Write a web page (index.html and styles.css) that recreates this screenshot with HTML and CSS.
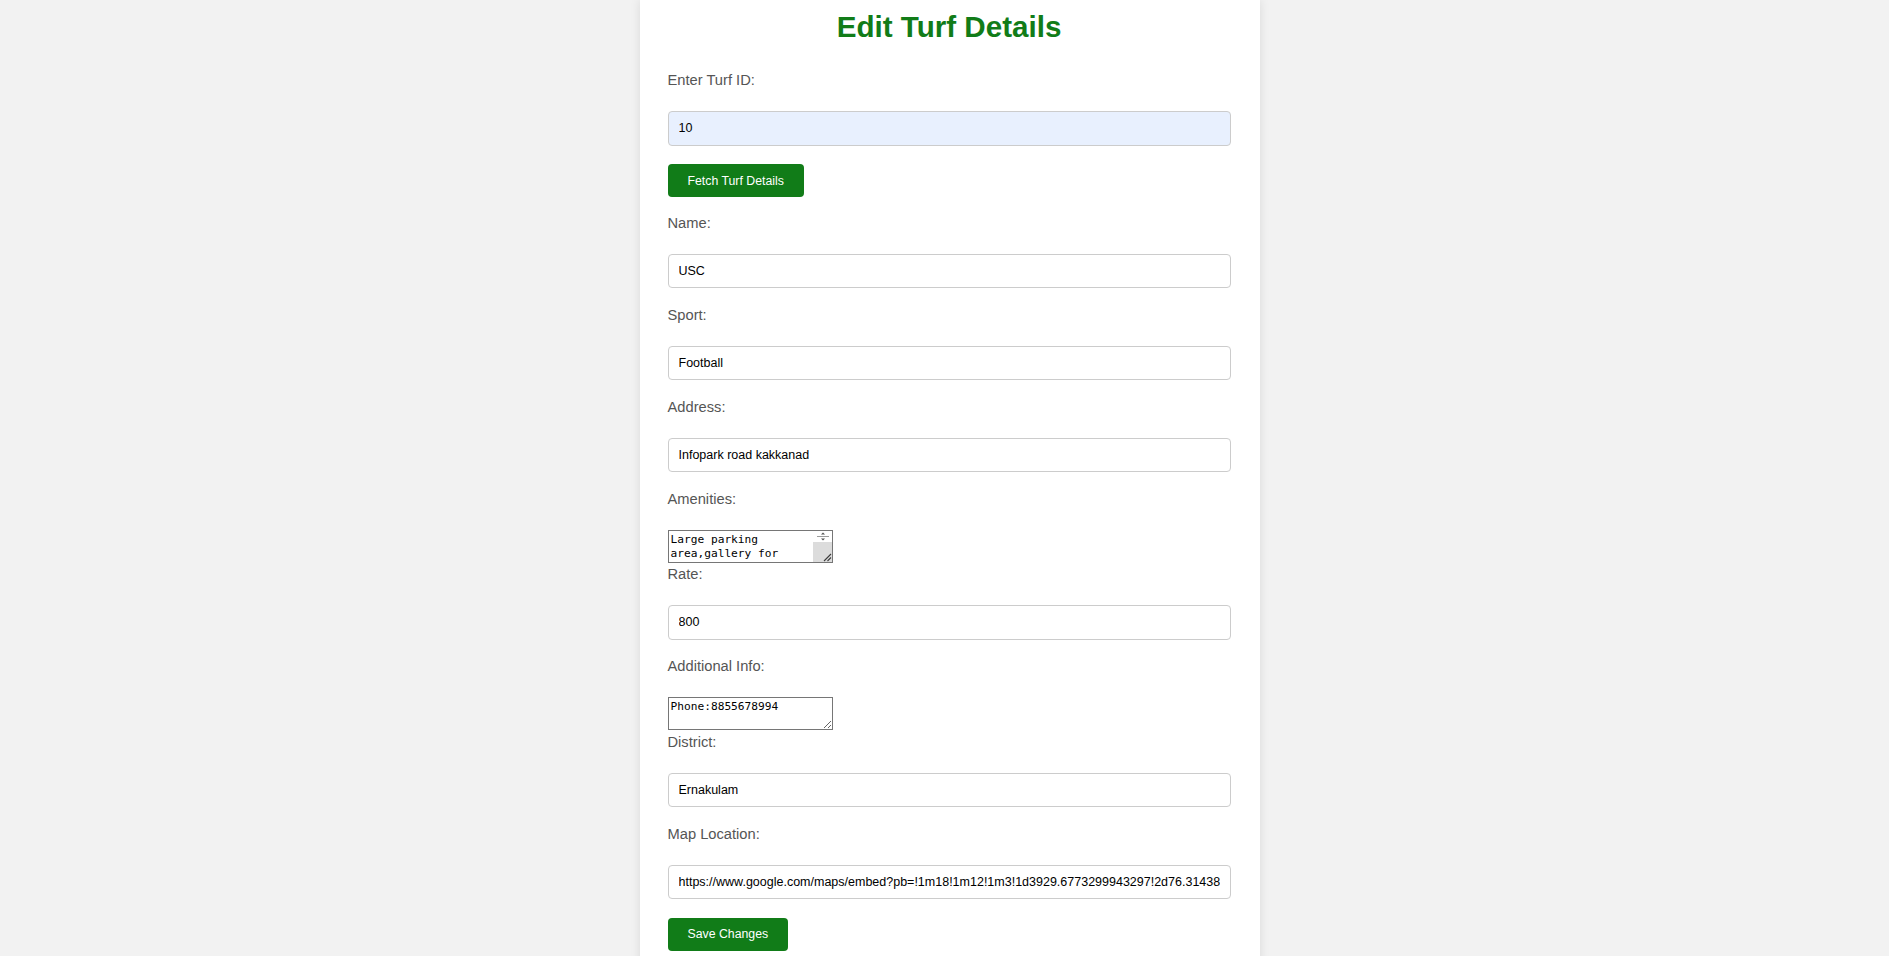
FILE: index.html
```html
<!DOCTYPE html>
<html lang="en">
<head>
<meta charset="utf-8">
<title>Edit Turf Details</title>
<link rel="stylesheet" href="styles.css">
</head>
<body>
<div class="container">
  <h2 class="title">Edit Turf Details</h2>
  <label class="field-label" for="turfId">Enter Turf ID:</label>
  <input class="field field-autofill" id="turfId" type="text" value="10">
  <button class="btn" type="button">Fetch Turf Details</button>

  <form class="edit-form">
    <label class="field-label" for="name">Name:</label>
    <input class="field" id="name" type="text" value="USC">

    <label class="field-label" for="sport">Sport:</label>
    <input class="field" id="sport" type="text" value="Football">

    <label class="field-label" for="address">Address:</label>
    <input class="field" id="address" type="text" value="Infopark road kakkanad">

    <label class="field-label" for="amenities">Amenities:</label>
    <div class="area-wrap">
      <textarea class="area area-scroll" id="amenities">Large parking area,gallery for spectators,changing rooms,washrooms</textarea>
      <div class="fake-scrollbar" aria-hidden="true">
        <svg class="sb-arrows" width="18" height="11" viewBox="0 0 18 11">
          <path d="M7 3.5 L9 1.5 L11 3.5 Z" fill="#505050"/>
          <line x1="3" y1="5.5" x2="15" y2="5.5" stroke="#9a9a9a" stroke-width="1"/>
          <path d="M7 7.5 L9 9.5 L11 7.5 Z" fill="#505050"/>
        </svg>
        <div class="sb-thumb">
          <svg class="sb-resizer" width="10" height="10" viewBox="0 0 10 10">
            <line x1="2" y1="9" x2="9" y2="2" stroke="#3c3c3c" stroke-width="1.1"/>
            <line x1="5.5" y1="9" x2="9" y2="5.5" stroke="#3c3c3c" stroke-width="1.1"/>
          </svg>
        </div>
      </div>
    </div>

    <label class="field-label" for="rate">Rate:</label>
    <input class="field" id="rate" type="text" value="800">

    <label class="field-label" for="info">Additional Info:</label>
    <textarea class="area" id="info">Phone:8855678994</textarea>

    <label class="field-label" for="district">District:</label>
    <input class="field" id="district" type="text" value="Ernakulam">

    <label class="field-label" for="map">Map Location:</label>
    <input class="field" id="map" type="text" value="https://www.google.com/maps/embed?pb=!1m18!1m12!1m3!1d3929.6773299943297!2d76.31438">

    <button class="btn" type="button">Save Changes</button>
  </form>
</div>
</body>
</html>
```

FILE: styles.css
```css
html, body {
  margin: 0;
  padding: 0;
}

body {
  background: #f2f2f2;
  font-family: "Liberation Sans", Arial, sans-serif;
  display: flex;
  justify-content: center;
  padding-left: 10px;
  min-height: 956px;
  box-sizing: border-box;
}

.container {
  width: 620px;
  box-sizing: border-box;
  background: #ffffff;
  padding: 11px 29px 4px 28px;
  box-shadow: 0 0 10px rgba(0, 0, 0, 0.1);
  display: flex;
  flex-direction: column;
  align-items: flex-start;
}

.edit-form {
  display: flex;
  flex-direction: column;
  align-items: flex-start;
  width: 100%;
  margin: 0;
}

.title {
  align-self: stretch;
  text-align: center;
  color: #117c18;
  font-size: 29.6px;
  line-height: 34px;
  font-weight: bold;
  margin: -1px 0 28px;
}

.field-label {
  display: block;
  color: #555555;
  font-size: 14.7px;
  line-height: 17px;
  margin: 0 0 22px;
}

.field {
  display: block;
  width: 100%;
  box-sizing: border-box;
  height: 34.5px;
  margin: 0 0 18.5px;
  padding: 0 10px;
  border: 1px solid #cccccc;
  border-radius: 4px;
  background: #ffffff;
  color: #000000;
  font-family: "Liberation Sans", Arial, sans-serif;
  font-size: 12.5px;
  outline: none;
}

.field-autofill {
  background: #e8f0fe;
}

.btn {
  display: block;
  height: 33px;
  padding: 0 20px;
  margin: 0 0 17.5px;
  border: none;
  border-radius: 4px;
  background: #117c18;
  color: #ffffff;
  font-family: "Liberation Sans", Arial, sans-serif;
  font-size: 12.3px;
  cursor: pointer;
}

.area {
  display: block;
  width: 165px;
  height: 33px;
  box-sizing: border-box;
  margin: 0 0 3.5px;
  padding: 2px 2px;
  border: 1px solid #767676;
  border-radius: 0;
  font-family: "DejaVu Sans Mono", "Liberation Mono", monospace;
  font-size: 11.2px;
  line-height: 14px;
  color: #000000;
  background: #ffffff;
  overflow: hidden;
}

.area-wrap {
  position: relative;
  margin: 0 0 3.5px;
}

.area-wrap .area {
  margin: 0;
  padding-right: 22px;
}

.fake-scrollbar {
  position: absolute;
  top: 1px;
  right: 1px;
  bottom: 1px;
  width: 19px;
  display: flex;
  flex-direction: column;
  background: #ffffff;
}

.sb-arrows {
  display: block;
  flex: none;
  margin-left: 1px;
}

.sb-thumb {
  flex: 1;
  background: #dcdcdc;
  position: relative;
}

.sb-resizer {
  position: absolute;
  right: 0;
  bottom: 0;
}
```
